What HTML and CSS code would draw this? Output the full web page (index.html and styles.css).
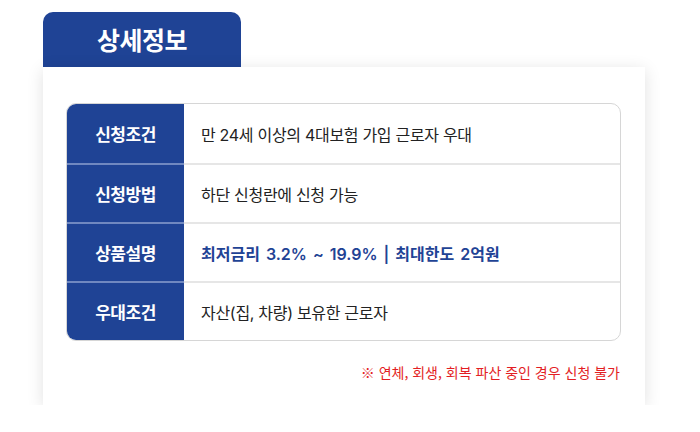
FILE: index.html
```html
<!DOCTYPE html>
<html lang="ko">
<head>
<meta charset="utf-8">
<link rel="stylesheet" href="styles.css">
</head>
<body>
<div class="wrap">
  <div class="tab">상세정보</div>
  <div class="card">
    <div class="table">
      <div class="row">
        <div class="label">신청조건</div>
        <div class="value">만 24세 이상의 4대보험 가입 근로자 우대</div>
      </div>
      <div class="row">
        <div class="label">신청방법</div>
        <div class="value">하단 신청란에 신청 가능</div>
      </div>
      <div class="row">
        <div class="label">상품설명</div>
        <div class="value hl">최저금리 3.2% ~ 19.9% | 최대한도 2억원</div>
      </div>
      <div class="row">
        <div class="label">우대조건</div>
        <div class="value">자산(집, 차량) 보유한 근로자</div>
      </div>
    </div>
    <p class="note">※ 연체, 회생, 회복 파산 중인 경우 신청 불가</p>
  </div>
</div>
</body>
</html>
```

FILE: styles.css
```css
* { box-sizing: border-box; }
body {
  margin: 0;
  background: #fff;
  font-family: Inter, "Noto Sans CJK KR", "Noto Sans", sans-serif;
}
.wrap {
  padding: 12px 0 0 43px;
  width: 645px;
}
.tab {
  width: 198px;
  height: 55px;
  background: #1f4395;
  border-radius: 10px 10px 0 0;
  color: #fff;
  font-size: 25px;
  font-weight: 700;
  display: flex;
  align-items: center;
  justify-content: center;
  letter-spacing: -0.5px;
  padding-bottom: 2px;
}
.card {
  width: 602px;
  height: 338px;
  background: #fff;
  box-shadow: 0 3px 16px rgba(0,0,0,0.12);
  padding: 36px 24px 0 23px;
}
.table {
  border: 1px solid #d6d6d6;
  border-radius: 10px;
  overflow: hidden;
}
.row {
  display: flex;
  height: 59px;
}
.row + .row .label { border-top: 2px solid #7088c0; }
.row + .row .value { border-top: 2px solid #e6e6e6; }
.label {
  width: 117px;
  flex: none;
  background: #1f4395;
  color: #fff;
  font-size: 17px;
  font-weight: 700;
  display: flex;
  align-items: center;
  justify-content: center;
  letter-spacing: -0.5px;
}
.value {
  flex: 1;
  display: flex;
  align-items: center;
  padding-left: 17px;
  font-size: 16px;
  color: #222;
  letter-spacing: -0.3px;
}
.value.hl {
  color: #1f4395;
  font-weight: 600;
  letter-spacing: 0;
  word-spacing: 2px;
}
.note {
  margin: 22px 1px 0 0;
  text-align: right;
  color: #e31e24;
  font-family: "Noto Sans CJK KR", sans-serif;
  font-size: 14px;
  line-height: 18px;
  letter-spacing: 0;
}
```
